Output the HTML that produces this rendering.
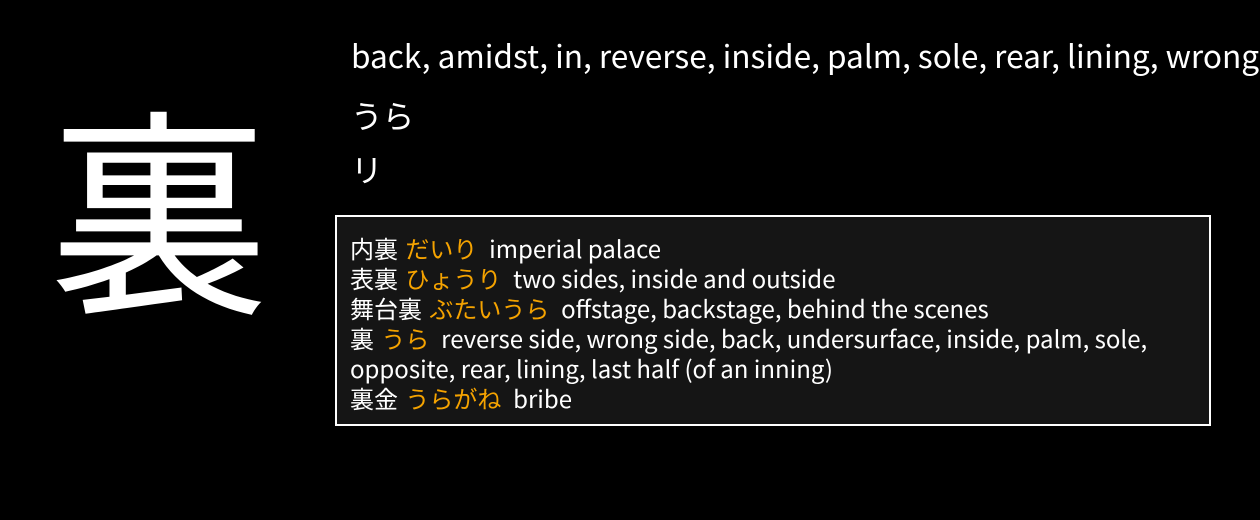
<!DOCTYPE html>
<html><head><meta charset="utf-8"><style>
html,body{margin:0;padding:0;background:#000;width:1260px;height:520px;overflow:hidden}
body{font-family:"Noto Sans CJK JP","Liberation Sans",sans-serif;color:#fff;position:relative}
.k{position:absolute;left:49px;top:52px;width:220px;text-align:center;font-size:220px;line-height:300px}
.clip{position:absolute;left:0;top:0;width:1260px;height:520px;overflow:hidden}
.m{position:absolute;left:351px;white-space:nowrap;font-size:31.6px;line-height:40px}
.box{position:absolute;left:335px;top:215px;width:872px;height:207px;border:2px solid #fff;background:#151515;box-sizing:content-box}
.in{padding:16px 13px 0 13px;font-size:24px;line-height:30px;white-space:nowrap}
.o{color:#f5a300;margin-left:2px;margin-right:1px}
</style></head><body>
<div class="k">裏</div>
<div class="clip">
<div class="m" style="top:35px">back, amidst, in, reverse, inside, palm, sole, rear, lining, wrong side</div>
</div>
<div class="m" style="top:95px">うら</div>
<div class="m" style="top:149px">リ</div>
<div class="box"><div class="in">
内裏 <span class="o">だいり</span>&nbsp; imperial palace<br>
表裏 <span class="o">ひょうり</span>&nbsp; two sides, inside and outside<br>
舞台裏 <span class="o">ぶたいうら</span>&nbsp; offstage, backstage, behind the scenes<br>
裏 <span class="o">うら</span>&nbsp; reverse side, wrong side, back, undersurface, inside, palm, sole,<br>opposite, rear, lining, last half (of an inning)<br>
裏金 <span class="o">うらがね</span>&nbsp; bribe
</div></div>
</body></html>
